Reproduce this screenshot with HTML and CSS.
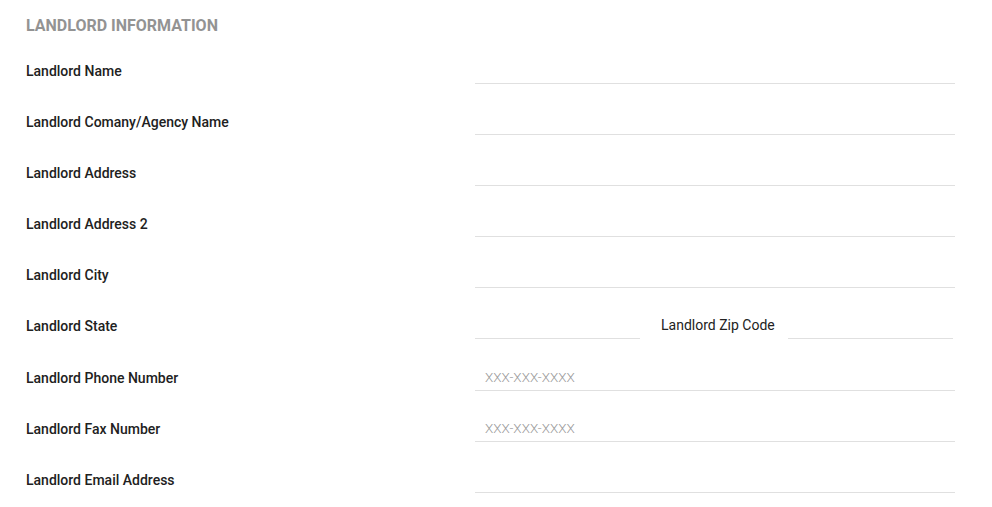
FILE: index.html
```html
<!DOCTYPE html>
<html lang="en">
<head>
    <meta charset="UTF-8">
    <title>Landlord Information</title>
    <link rel="stylesheet" href="styles.css">
</head>
<body>
    <form class="section">
        <h2 class="section-title">LANDLORD INFORMATION</h2>

        <div class="field">
            <label>Landlord Name</label>
            <input type="text" class="line-input">
        </div>
        <div class="field">
            <label>Landlord Comany/Agency Name</label>
            <input type="text" class="line-input">
        </div>
        <div class="field">
            <label>Landlord Address</label>
            <input type="text" class="line-input">
        </div>
        <div class="field">
            <label>Landlord Address 2</label>
            <input type="text" class="line-input">
        </div>
        <div class="field">
            <label>Landlord City</label>
            <input type="text" class="line-input">
        </div>
        <div class="field field-split">
            <label>Landlord State</label>
            <div class="split">
                <input type="text" class="line-input short">
                <span class="inline-label">Landlord Zip Code</span>
                <input type="text" class="line-input short">
            </div>
        </div>
        <div class="field">
            <label>Landlord Phone Number</label>
            <input type="text" class="line-input" placeholder="XXX-XXX-XXXX">
        </div>
        <div class="field">
            <label>Landlord Fax Number</label>
            <input type="text" class="line-input" placeholder="XXX-XXX-XXXX">
        </div>
        <div class="field">
            <label>Landlord Email Address</label>
            <input type="text" class="line-input">
        </div>
    </form>
</body>
</html>
```

FILE: styles.css
```css
body {
    margin: 0;
    background: #fff;
    font-family: Roboto, "Liberation Sans", sans-serif;
    font-size: 14px;
    color: #222;
}
.section {
    padding: 16px 37px 0 26px;
}
.section-title {
    margin: 0 0 20px;
    font-size: 16px;
    line-height: 20px;
    font-weight: 700;
    color: #939393;
}
.field {
    display: grid;
    grid-template-columns: 449px 1fr;
    align-items: center;
    margin-bottom: 23px;
}
.field-split {
    margin-bottom: 24px;
}
.field label {
    font-weight: 500;
    color: #212121;
    line-height: 20px;
    padding-top: 1px;
}
.line-input {
    height: 28px;
    box-sizing: border-box;
    width: 100%;
    border: none;
    border-bottom: 1px solid #e0e0e0;
    padding: 1px 10px 0;
    font-family: Roboto, "Liberation Sans", sans-serif;
    font-size: 14px;
    color: #333;
    outline: none;
    background: transparent;
}
.line-input::placeholder {
    color: #999;
    font-weight: 300;
    font-size: 13.5px;
}
.split {
    display: flex;
    align-items: center;
    width: 478px;
}
.line-input.short {
    width: 165px;
    flex: none;
}
.inline-label {
    padding-left: 21px;
    margin-right: auto;
    color: #222;
}
```
